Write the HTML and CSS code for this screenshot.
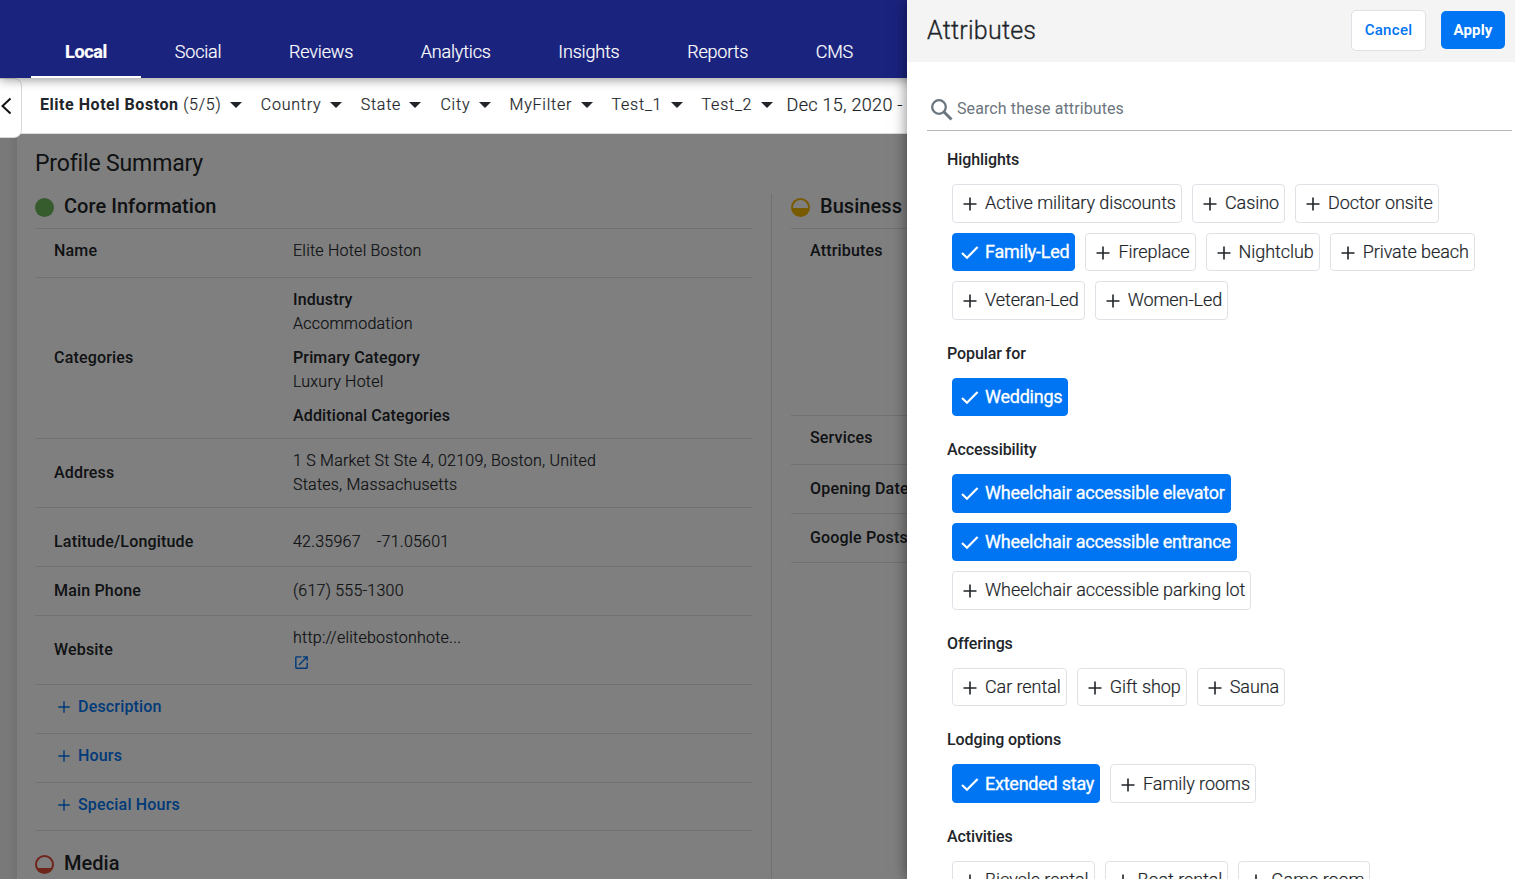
FILE: index.html
```html
<!DOCTYPE html>
<html lang="en">
<head>
  <meta charset="UTF-8">
  <title>Profile Summary</title>
  <link rel="stylesheet" href="styles.css">
</head>
<body>

  <!-- shared icons -->
  <svg class="sprite">
    <symbol id="plus" viewBox="0 0 16 16"><path d="M8 1.5v13M1.5 8h13" fill="none" stroke="currentColor" stroke-width="1.6"/></symbol>
    <symbol id="check" viewBox="0 0 20 16"><path d="M2 8L7 12.8L17.6 2" fill="none" stroke="currentColor" stroke-width="2.2"/></symbol>
  </svg>

  <header class="navbar">
    <nav class="tabs">
      <a class="tab active">Local</a>
      <a class="tab">Social</a>
      <a class="tab">Reviews</a>
      <a class="tab">Analytics</a>
      <a class="tab">Insights</a>
      <a class="tab">Reports</a>
      <a class="tab">CMS</a>
    </nav>
  </header>

  <div class="filter-bar">
    <div class="filter"><span><b>Elite Hotel Boston</b> (5/5)</span><i class="caret"></i></div>
    <div class="filter"><span>Country</span><i class="caret"></i></div>
    <div class="filter"><span>State</span><i class="caret"></i></div>
    <div class="filter"><span>City</span><i class="caret"></i></div>
    <div class="filter"><span>MyFilter</span><i class="caret"></i></div>
    <div class="filter"><span>Test_1</span><i class="caret"></i></div>
    <div class="filter"><span>Test_2</span><i class="caret"></i></div>
    <div class="date">Dec 15, 2020 -</div>
  </div>

  <div class="collapse">
    <svg width="12" height="18" viewBox="0 0 12 18"><path d="M10.5 1.5L2.5 9l8 7.5" fill="none" stroke="#111" stroke-width="2"/></svg>
  </div>

  <main class="page">
    <div class="rail"></div>
    <div class="content">
      <h1>Profile Summary</h1>
      <div class="columns">
        <div class="column core">
          <h2><span class="status full"></span>Core Information</h2>
          <div class="row">
            <div class="label">Name</div>
            <div class="value">Elite Hotel Boston</div>
          </div>
          <div class="row categories">
            <div class="label">Categories</div>
            <div class="value">
              <p><b>Industry</b><br>Accommodation</p>
              <p><b>Primary Category</b><br>Luxury Hotel</p>
              <p><b>Additional Categories</b></p>
            </div>
          </div>
          <div class="row address">
            <div class="label">Address</div>
            <div class="value">1 S Market St Ste 4, 02109, Boston, United States, Massachusetts</div>
          </div>
          <div class="row geo">
            <div class="label">Latitude/Longitude</div>
            <div class="value"><span>42.35967</span><span>-71.05601</span></div>
          </div>
          <div class="row phone">
            <div class="label">Main Phone</div>
            <div class="value">(617) 555-1300</div>
          </div>
          <div class="row website">
            <div class="label">Website</div>
            <div class="value">http://elitebostonhote...<br>
              <svg class="open-icon" width="17" height="17" viewBox="0 0 24 24"><path fill="currentColor" d="M19 19H5V5h7V3H5a2 2 0 0 0-2 2v14a2 2 0 0 0 2 2h14c1.100 0 2-.9 2-2v-7h-2v7zM14 3v2h3.590l-9.830 9.830 1.410 1.410L19 6.410V10h2V3h-7z"/></svg>
            </div>
          </div>
          <div class="row add"><svg><use href="#plus"/></svg>Description</div>
          <div class="row add"><svg><use href="#plus"/></svg>Hours</div>
          <div class="row add last"><svg><use href="#plus"/></svg>Special Hours</div>
          <h2 class="media"><span class="status low"></span>Media</h2>
        </div>

        <div class="column business">
          <h2><span class="status half"></span>Business</h2>
          <div class="row attributes"><div class="label">Attributes</div></div>
          <div class="row"><div class="label">Services</div></div>
          <div class="row opening"><div class="label">Opening Date</div></div>
          <div class="row opening"><div class="label">Google Posts</div></div>
        </div>
      </div>
    </div>
  </main>

  <div class="backdrop"></div>

  <aside class="drawer">
    <div class="drawer-header">
      <div class="drawer-title">Attributes</div>
      <button class="btn cancel">Cancel</button>
      <button class="btn apply">Apply</button>
    </div>

    <div class="search">
      <svg width="24" height="24" viewBox="0 0 24 24"><circle cx="9" cy="9" r="6.800" fill="none" stroke="#69757f" stroke-width="2.300"/><path d="M13.800 13.800L21.500 21.500" stroke="#69757f" stroke-width="3"/></svg>
      <span>Search these attributes</span>
    </div>

    <div class="groups">
      <section class="group">
        <h3>Highlights</h3>
        <div class="chips">
          <div class="chip"><svg><use href="#plus"/></svg>Active military discounts</div>
          <div class="chip"><svg><use href="#plus"/></svg>Casino</div>
          <div class="chip"><svg><use href="#plus"/></svg>Doctor onsite</div>
          <div class="chip selected"><svg><use href="#check"/></svg>Family-Led</div>
          <div class="chip"><svg><use href="#plus"/></svg>Fireplace</div>
          <div class="chip"><svg><use href="#plus"/></svg>Nightclub</div>
          <div class="chip"><svg><use href="#plus"/></svg>Private beach</div>
          <div class="chip"><svg><use href="#plus"/></svg>Veteran-Led</div>
          <div class="chip"><svg><use href="#plus"/></svg>Women-Led</div>
        </div>
      </section>
      <section class="group">
        <h3>Popular for</h3>
        <div class="chips">
          <div class="chip selected"><svg><use href="#check"/></svg>Weddings</div>
        </div>
      </section>
      <section class="group">
        <h3>Accessibility</h3>
        <div class="chips">
          <div class="chip selected"><svg><use href="#check"/></svg>Wheelchair accessible elevator</div>
          <div class="chip selected"><svg><use href="#check"/></svg>Wheelchair accessible entrance</div>
          <div class="chip"><svg><use href="#plus"/></svg>Wheelchair accessible parking lot</div>
        </div>
      </section>
      <section class="group">
        <h3>Offerings</h3>
        <div class="chips">
          <div class="chip"><svg><use href="#plus"/></svg>Car rental</div>
          <div class="chip"><svg><use href="#plus"/></svg>Gift shop</div>
          <div class="chip"><svg><use href="#plus"/></svg>Sauna</div>
        </div>
      </section>
      <section class="group">
        <h3>Lodging options</h3>
        <div class="chips">
          <div class="chip selected"><svg><use href="#check"/></svg>Extended stay</div>
          <div class="chip"><svg><use href="#plus"/></svg>Family rooms</div>
        </div>
      </section>
      <section class="group">
        <h3>Activities</h3>
        <div class="chips">
          <div class="chip"><svg><use href="#plus"/></svg>Bicycle rental</div>
          <div class="chip"><svg><use href="#plus"/></svg>Boat rental</div>
          <div class="chip"><svg><use href="#plus"/></svg>Game room</div>
        </div>
      </section>
    </div>
  </aside>

</body>
</html>
```
FILE: styles.css
```css
* {
  box-sizing: border-box;
}

body {
  margin: 0;
  height: 879px;
  overflow: hidden;
  position: relative;
  display: flex;
  flex-direction: column;
  font-family: Roboto, sans-serif;
  font-size: 16px;
  color: #212529;
  background: #fff;
}

h1, h2, h3, p {
  margin: 0;
}

b {
  font-weight: 500;
}

.sprite {
  display: none;
}

/* top navigation */
.navbar {
  flex: none;
  height: 78px;
  padding: 26px 0 0 31px;
  background: #1a237e;
  box-shadow: 0 2px 10px rgba(0, 0, 0, .4);
  position: relative;
  z-index: 4;
}

.tabs {
  display: flex;
}

.tab {
  height: 52px;
  padding: 0 33.8px;
  line-height: 52px;
  font-size: 18px;
  font-weight: 300;
  letter-spacing: -.18px;
  color: #fff;
  border-bottom: 2px solid transparent;
  -webkit-text-stroke: .2px currentColor;
}

.tab.active {
  padding: 0 34px;
  font-weight: 700;
  letter-spacing: -.35px;
  border-bottom-color: #fff;
}

/* filters */
.filter-bar {
  flex: none;
  height: 56px;
  padding: 0 0 3px 40px;
  display: flex;
  align-items: center;
  background: #fff;
  border-bottom: 1px solid #ddd;
  position: relative;
  z-index: 2;
  white-space: nowrap;
  font-weight: 300;
  letter-spacing: .77px;
  -webkit-text-stroke: .2px currentColor;
}

.filter-bar b {
  font-weight: 700;
  letter-spacing: .54px;
  -webkit-text-stroke: 0;
}

.filter {
  display: flex;
  align-items: center;
  margin-right: 19px;
}

.filter:nth-child(7) {
  margin-right: 14px;
}

.caret {
  margin: 2px 0 0 8.300px;
  border-top: 6px solid #212529;
  border-left: 6px solid transparent;
  border-right: 6px solid transparent;
}

.date {
  font-size: 18px;
  letter-spacing: .3px;
}

.collapse {
  position: absolute;
  left: -8px;
  top: 78px;
  z-index: 3;
  width: 30px;
  height: 60px;
  padding: 18px 0 0 7px;
  background: #fff;
  border: 1px solid #d8d8d8;
  border-radius: 0 8px 8px 0;
}

/* page */
.page {
  flex: 1;
  display: flex;
  min-height: 0;
}

.rail {
  flex: none;
  width: 17px;
  background: linear-gradient(90deg, #f2f2f2 50%, #e4e4e4);
}

.content {
  flex: 1;
  padding: 16px 0 0 18px;
}

h1 {
  font-size: 23px;
  font-weight: 400;
  line-height: 27px;
  letter-spacing: -.15px;
}

.columns {
  display: flex;
  margin-top: 17px;
}

.column h2 {
  display: flex;
  align-items: center;
  height: 35px;
  padding-bottom: 11px;
  font-size: 20px;
  font-weight: 500;
  letter-spacing: .05px;
  white-space: nowrap;
  border-bottom: 1px solid #dee2e6;
}

.core {
  width: 717px;
}

.business {
  width: 745px;
  margin-left: 19px;
  padding-left: 19px;
  border-left: 1px solid #dee2e6;
}

.status {
  width: 19px;
  height: 19px;
  margin: 3px 10px 0 0;
  border-radius: 50%;
}

.status.full {
  background: #6db65b;
}

.status.half {
  border: 2px solid #f0b400;
  background: linear-gradient(transparent 54%, #f0b400 54%);
}

.status.low {
  border: 2px solid #e04a35;
  background: linear-gradient(transparent 72%, #e04a35 72%);
}

.row {
  display: flex;
  align-items: center;
  height: 49px;
  padding: 0 0 4px 19px;
  line-height: 24px;
  letter-spacing: .18px;
  border-bottom: 1px solid #dee2e6;
}

.label {
  width: 239px;
  font-weight: 500;
}

.value {
  width: 320px;
  font-weight: 300;
  letter-spacing: .23px;
  -webkit-text-stroke: .2px currentColor;
}

.value b {
  letter-spacing: .13px;
  -webkit-text-stroke: 0;
}

.value p {
  margin-bottom: 10px;
}

.row.categories {
  height: 161px;
  padding: 10px 0 10px 19px;
}

.row.categories .value {
  padding-top: 10px;
}

.row.address {
  height: 69px;
  padding-bottom: 0;
}

.row.geo {
  height: 59px;
  padding: 10px 0 0 19px;
}

.row.phone {
  padding-bottom: 0;
}

.geo .value {
  display: flex;
  gap: 16px;
}

.row.website {
  height: 69px;
  padding-bottom: 0;
}

.website .value {
  margin-top: -4px;
}

.open-icon {
  display: block;
  margin-top: 4px;
  color: #0075f3;
}

.row.add {
  padding-left: 22px;
  font-weight: 500;
  color: #0075f3;
}

.add svg {
  width: 14px;
  height: 14px;
  margin-right: 7px;
}

.row.add.last {
  height: 48px;
  padding-bottom: 3px;
}

.column h2.media {
  height: 64px;
  padding: 0;
  border: 0;
}

.row.attributes {
  height: 187px;
  align-items: flex-start;
  padding-top: 10px;
}

.row.opening {
  padding-bottom: 0;
}

/* dims the page only, the navbar and filters stay above it */
.backdrop {
  position: absolute;
  inset: 0;
  z-index: 1;
  background: rgba(0, 0, 0, .5);
}

/* attributes drawer */
.drawer {
  position: absolute;
  top: 0;
  right: 0;
  bottom: 0;
  z-index: 5;
  width: 608px;
  background: #fff;
  box-shadow: 0 0 14px rgba(0, 0, 0, .5);
}

.drawer-header {
  display: flex;
  align-items: center;
  height: 62px;
  padding: 0 10px 2px 20px;
  background: #f4f4f4;
}

.drawer-title {
  flex: 1;
  padding-top: 1px;
  font-size: 25px;
  font-weight: 300;
  letter-spacing: .25px;
  -webkit-text-stroke: .3px currentColor;
}

.btn {
  height: 38px;
  padding: 0;
  border: 0;
  border-radius: 5px;
  font-family: inherit;
  font-size: 15px;
  font-weight: 500;
  letter-spacing: .3px;
}

.btn.cancel {
  width: 75px;
  height: 41px;
  margin-right: 15px;
  color: #0075f3;
  background: #fff;
  border: 1px solid #dee2e6;
}

.btn.apply {
  width: 64px;
  color: #fff;
  background: #0075f3;
  font-weight: 700;
  letter-spacing: .2px;
}

.search {
  display: flex;
  align-items: center;
  height: 44px;
  margin: 25px 3px 0 20px;
  padding-left: 3px;
  color: #6c757d;
  letter-spacing: .1px;
  border-bottom: 1px solid #b8b8b8;
}

.search svg {
  margin: 2px 3px 0 0;
}

.groups {
  padding: 17px 30px 0 40px;
}

.group {
  margin-bottom: 21.970px;
}

h3 {
  font-size: 16px;
  font-weight: 500;
  line-height: 24px;
  letter-spacing: -.1px;
}

.chips {
  display: flex;
  flex-wrap: wrap;
  gap: 10px;
  padding: 12px 0 0 5px;
}

.chip {
  display: flex;
  align-items: center;
  height: 38.550px;
  padding: 0 5px 1px 9px;
  font-size: 18px;
  font-weight: 300;
  letter-spacing: -.065px;
  white-space: nowrap;
  border: 1px solid #dee2e6;
  border-radius: 4px;
  -webkit-text-stroke: .2px currentColor;
}

.chip svg {
  width: 16px;
  height: 16px;
  margin: 3px 7px 0 0;
}

.chip.selected {
  color: #fff;
  background: #0075f3;
  border-color: #0075f3;
  padding-left: 7px;
  font-weight: 400;
  letter-spacing: -.24px;
  -webkit-text-stroke: .3px #fff;
}

.chip.selected svg {
  width: 20px;
  margin-right: 5px;
}
```
